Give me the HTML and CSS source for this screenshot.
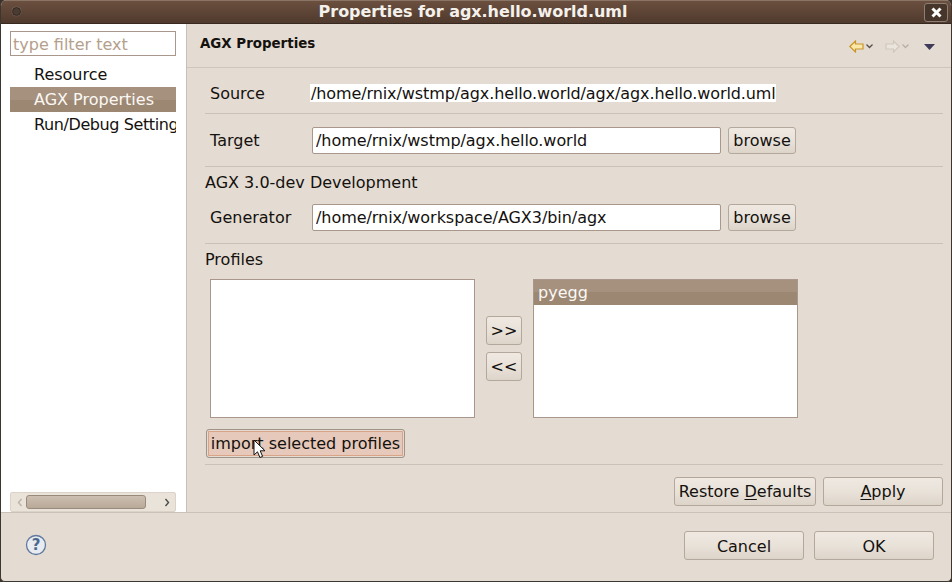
FILE: index.html
```html
<!DOCTYPE html>
<html lang="en">
<head>
  <meta charset="UTF-8" />
  <title>Properties for agx.hello.world.uml</title>
  <link rel="stylesheet" href="styles.css">
</head>
<body>
  <div class="window">
    <div class="titlebar">
      <span class="win-dot"></span>
      <span class="win-title">Properties for agx.hello.world.uml</span>
      <span class="win-close">
        <svg width="13" height="13" viewBox="0 0 13 13"><path d="M2.500 2.500l8 8M10.500 2.500l-8 8" stroke="#fff" stroke-width="3"/></svg>
      </span>
    </div>

    <div class="main">
      <aside class="sidebar">
        <input class="filter" type="text" placeholder="type filter text" />
        <ul class="tree">
          <li>Resource</li>
          <li class="selected">AGX Properties</li>
          <li class="tight">Run/Debug Settings</li>
        </ul>
        <div class="hscroll">
          <svg class="arrow" width="6" height="9" viewBox="0 0 6 9"><path d="M4.500 1L1.500 4.500L4.500 8" fill="none" stroke="#bdb4a8" stroke-width="1.400"/></svg>
          <span class="thumb"></span>
          <svg class="arrow" width="6" height="9" viewBox="0 0 6 9"><path d="M1.500 1L4.500 4.500L1.500 8" fill="none" stroke="#4c4c4c" stroke-width="1.400"/></svg>
        </div>
      </aside>

      <section class="page">
        <div class="page-head">
          <h1>AGX Properties</h1>
          <div class="nav-icons">
            <svg width="15" height="13" viewBox="0 0 15 13"><path d="M.8 6.500L6.500 1v3h7.500v5H6.500v3z" fill="#fbe8a8" stroke="#c8952a" stroke-width="1.200"/></svg>
            <svg class="chev" width="7" height="5" viewBox="0 0 7 5"><path d="M.5 .5L3.500 3.500L6.500 .5" fill="none" stroke="#55504a" stroke-width="1.300"/></svg>
            <svg class="gap-l" width="15" height="13" viewBox="0 0 15 13"><path d="M14.200 6.500L8.500 1v3H1v5h7.500v3z" fill="#e9e4dc" stroke="#cfc8bc" stroke-width="1.200"/></svg>
            <svg class="chev" width="7" height="5" viewBox="0 0 7 5"><path d="M.5 .5L3.500 3.500L6.500 .5" fill="none" stroke="#b8b0a6" stroke-width="1.300"/></svg>
            <svg class="gap-m" width="11" height="6" viewBox="0 0 11 6"><path d="M0 0h11L5.500 6z" fill="#3f3a5a"/></svg>
          </div>
        </div>

        <div class="form">
          <div class="row row-source">
            <label>Source</label>
            <span class="path">/home/rnix/wstmp/agx.hello.world/agx/agx.hello.world.uml</span>
          </div>
          <hr />
          <div class="row row-target">
            <label>Target</label>
            <input class="field" type="text" value="/home/rnix/wstmp/agx.hello.world" />
            <button class="btn browse">browse</button>
          </div>
          <hr />
          <div class="group-title">AGX 3.0-dev Development</div>
          <div class="row row-gen">
            <label>Generator</label>
            <input class="field" type="text" value="/home/rnix/workspace/AGX3/bin/agx" />
            <button class="btn browse">browse</button>
          </div>
          <hr />
          <div class="group-title">Profiles</div>
          <div class="profiles">
            <div class="list"></div>
            <div class="movers">
              <button class="btn mover">&gt;&gt;</button>
              <button class="btn mover">&lt;&lt;</button>
            </div>
            <div class="list">
              <div class="list-item">pyegg</div>
            </div>
          </div>
          <div class="import-wrap">
            <button class="btn import">import selected profiles</button>
            <svg class="cursor" width="13" height="20" viewBox="0 0 13 20"><path d="M1 1v15l3.500-3.200 2.400 5.700 2.700-1.100-2.400-5.600h4.800z" fill="#fff" stroke="#111" stroke-width="1"/></svg>
          </div>
          <hr class="hr-last" />
          <div class="page-actions">
            <button class="btn restore">Restore <u>D</u>efaults</button>
            <button class="btn apply"><u>A</u>pply</button>
          </div>
        </div>
      </section>
    </div>

    <footer class="dialog-foot">
      <svg class="help" width="22" height="22" viewBox="0 0 22 22">
        <circle cx="11" cy="11" r="9.500" fill="#e8ebf0" stroke="#5f7a9e" stroke-width="1.300"/>
        <text x="11" y="16" text-anchor="middle" class="help-q">?</text>
      </svg>
      <div class="foot-actions">
        <button class="btn foot-btn">Cancel</button>
        <button class="btn foot-btn">OK</button>
      </div>
    </footer>
  </div>
</body>
</html>
```

FILE: styles.css
```css
* {
  box-sizing: border-box;
}
html, body {
  margin: 0;
  padding: 0;
  background: #3a332c;
}
body {
  font-family: "DejaVu Sans", sans-serif;
  font-size: 16px;
  color: #14110e;
}
.window {
  width: 952px;
  height: 582px;
  display: flex;
  flex-direction: column;
  background: #e4dcd3;
  border-left: 1px solid #3c3630;
  border-right: 1px solid #3c3630;
  border-bottom: 1px solid #3c3630;
  border-radius: 6px 6px 5px 5px;
  overflow: hidden;
}

/* title bar */
.titlebar {
  position: relative;
  height: 24px;
  flex: none;
  display: flex;
  align-items: center;
  justify-content: center;
  padding-bottom: 2px;
  background: linear-gradient(#6b4f3f, #4f3a2d);
  border-top: 1px solid #8a7466;
  border-bottom: 1px solid #37291f;
}
.win-title {
  color: #f4f1ec;
  font-weight: bold;
  font-size: 16px;
  letter-spacing: -.05px;
  margin-left: -6px;
}
.win-dot {
  position: absolute;
  left: 11px;
  top: 6px;
  width: 9px;
  height: 9px;
  border-radius: 50%;
  background: #4a3c32;
  border: 1px solid #2d241d;
  box-shadow: 0 0 1px #a39488;
}
.win-close {
  position: absolute;
  right: 3px;
  top: 2px;
  width: 24px;
  height: 19px;
  display: flex;
  align-items: center;
  justify-content: center;
  border: 1px solid #8d7f74;
  border-radius: 3px;
  background: #46352a;
}

/* left tree */
.main {
  flex: 1;
  display: flex;
  min-height: 0;
}
.sidebar {
  width: 186px;
  flex: none;
  display: flex;
  flex-direction: column;
  background: #fff;
  padding: 7px 9px 0 9px;
  border-right: 1px solid #c9c0b5;
}
.filter {
  width: 166px;
  height: 25px;
  padding: 2px 2px 0;
  border: 1px solid #a8978a;
  font-family: inherit;
  font-size: 16px;
  background: #fff;
  outline: none;
}
.filter::placeholder {
  color: #b5a08c;
  opacity: 1;
}
.tree {
  list-style: none;
  margin: 6px 0 0;
  padding: 0;
  width: 166px;
  flex: 1;
  overflow: hidden;
}
.tree li {
  height: 25px;
  line-height: 26px;
  padding-left: 24px;
  font-size: 16px;
  white-space: nowrap;
  overflow: hidden;
}
.tree .selected {
  color: #fbf8f4;
  background: linear-gradient(#a5917e 50%, #9c8773 50%);
}
.tree .tight {
  letter-spacing: -.4px;
}
.hscroll {
  width: 166px;
  height: 20px;
  display: flex;
  align-items: center;
  justify-content: space-between;
  padding: 0 5px 0 6px;
  background: #e9e3da;
  border: 1px solid #dcd3c8;
  border-radius: 2px;
}
.thumb {
  width: 120px;
  height: 14px;
  margin-right: 15px;
  background: linear-gradient(#cdbfb1, #b8a999);
  border: 1px solid #998a7b;
  border-radius: 3px;
  flex: none;
}

/* right page */
.page {
  flex: 1;
  display: flex;
  flex-direction: column;
  min-width: 0;
}
.page-head {
  height: 44px;
  flex: none;
  display: flex;
  align-items: flex-start;
  justify-content: space-between;
  border-bottom: 1px solid #cfc6bb;
  padding: 12px 16px 0 13px;
}
.page-head h1 {
  margin: 0;
  font-size: 13.400px;
  line-height: 15px;
}
.nav-icons {
  display: flex;
  align-items: center;
  margin-top: 4px;
}
.chev {
  margin-left: 2px;
}
.gap-l {
  margin-left: 12px;
}
.gap-m {
  margin-left: 15px;
}
.form {
  flex: 1;
  padding: 0 8px 0 18px;
}
.form hr {
  border: 0;
  border-top: 1px solid #cbc2b7;
  margin: 0;
  height: 0;
}
.row {
  display: flex;
  align-items: center;
  padding-left: 5px;
  height: 45px;
}
.row-source {
  padding-top: 5px;
}
.row-target {
  height: 52px;
}
.row label {
  width: 102px;
  flex: none;
}
.row-gen {
  padding-bottom: 7px;
}
.path {
  background: #fff;
  height: 18px;
  line-height: 19px;
  white-space: nowrap;
  letter-spacing: -.1px;
  margin-left: -2px;
  padding-left: 1px;
}
.field {
  width: 409px;
  height: 27px;
  padding: 0 3px;
  border: 1px solid #a8978a;
  border-radius: 2px;
  background: #fff;
  font-family: inherit;
  font-size: 16px;
  letter-spacing: -.05px;
  color: inherit;
}
.btn {
  font-family: inherit;
  font-size: 16px;
  color: inherit;
  padding: 0;
  border: 1px solid #b3a89b;
  border-radius: 3px;
  background: linear-gradient(#efe9e2, #e8e1d8 55%, #ddd4c9);
  white-space: nowrap;
}
.btn u {
  text-underline-offset: 2px;
}
.browse {
  width: 68px;
  height: 27px;
  margin-left: 7px;
}
.group-title {
  height: 31px;
  line-height: 31px;
}
.profiles {
  display: flex;
  padding-left: 5px;
  margin-top: 4px;
}
.list {
  width: 265px;
  height: 139px;
  background: #fff;
  border: 1px solid #a8978a;
}
.list-item {
  height: 25px;
  line-height: 25px;
  padding-left: 4px;
  color: #fbf8f4;
  background: linear-gradient(#a5917e 50%, #9c8773 50%);
}
.movers {
  width: 58px;
  display: flex;
  flex-direction: column;
  align-items: center;
  gap: 7px;
  padding-top: 37px;
}
.mover {
  width: 36px;
  height: 29px;
}
.import-wrap {
  position: relative;
  width: 200px;
  margin: 11px 0 6px 1px;
}
.import {
  width: 199px;
  height: 29px;
  display: block;
  border-color: #a09488;
  background: #e6c9ba;
  box-shadow: inset 0 0 0 1px #e4dcd3, inset 0 0 0 2px #d9a388;
}
.cursor {
  position: absolute;
  left: 47px;
  top: 10px;
}
.page-actions {
  display: flex;
  justify-content: flex-end;
  gap: 7px;
  margin-top: 12px;
}
.restore {
  width: 142px;
  height: 29px;
}
.apply {
  width: 120px;
  height: 29px;
}

/* dialog footer */
.dialog-foot {
  height: 69px;
  flex: none;
  display: flex;
  align-items: flex-start;
  justify-content: space-between;
  border-top: 1px solid #cbc2b7;
  padding: 18px 17px 0 24px;
}
.help {
  margin-top: 3px;
}
.help-q {
  font-family: "DejaVu Sans", sans-serif;
  font-size: 15px;
  font-weight: bold;
  fill: #4d688f;
}
.foot-actions {
  display: flex;
  gap: 10px;
}
.foot-btn {
  width: 120px;
  height: 29px;
  padding-top: 1px;
}
```
